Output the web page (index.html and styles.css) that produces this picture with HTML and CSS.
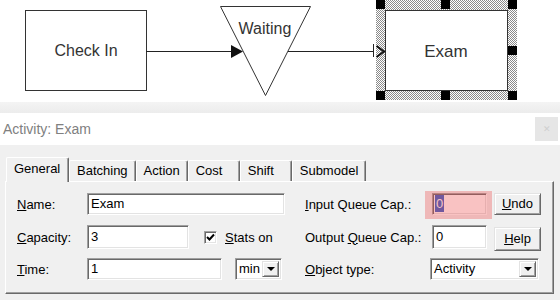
FILE: index.html
```html
<!DOCTYPE html>
<html lang="en">
<head>
  <meta charset="UTF-8" />
  <title>Activity: Exam</title>
  <link rel="stylesheet" href="styles.css">
</head>
<body>
  <div class="canvas">
    <svg width="560" height="102" viewBox="0 0 560 102">
      <defs>
        <pattern id="dots" width="2" height="2" patternUnits="userSpaceOnUse">
          <rect width="2" height="2" fill="#fff"/>
          <rect width="1" height="1" fill="#8a8a8a"/>
          <rect x="1" y="1" width="1" height="1" fill="#8a8a8a"/>
        </pattern>
      </defs>
      <!-- check in -->
      <rect x="25.5" y="10.5" width="121" height="80" fill="#fff" stroke="#333"/>
      <text class="node-label" x="86" y="56">Check In</text>
      <line x1="146" y1="51.5" x2="234" y2="51.5" stroke="#222"/>
      <!-- waiting queue -->
      <polygon points="220.5,6.5 310.5,6.5 265.5,95.5" fill="#fff" stroke="#333"/>
      <polygon points="231,45 243,51.5 231,58" fill="#111"/>
      <text class="node-label" x="265" y="34">Waiting</text>
      <line x1="288" y1="51.5" x2="373" y2="51.5" stroke="#222"/>
      <line x1="373.5" y1="44" x2="373.5" y2="57" stroke="#222"/>
      <!-- exam (selected) -->
      <rect x="376" y="0" width="141" height="100" fill="url(#dots)"/>
      <rect x="385.5" y="10.5" width="122" height="80" fill="#fff" stroke="#333"/>
      <polyline points="376.5,46 384,51.5 376.5,57" fill="none" stroke="#111" stroke-width="2"/>
      <text class="node-label big" x="446" y="57">Exam</text>
      <rect x="376" y="0" width="9" height="9" fill="#000"/>
      <rect x="441" y="0" width="9" height="9" fill="#000"/>
      <rect x="508" y="0" width="9" height="9" fill="#000"/>
      <rect x="508" y="46" width="9" height="9" fill="#000"/>
      <rect x="376" y="91" width="9" height="9" fill="#000"/>
      <rect x="441" y="91" width="9" height="9" fill="#000"/>
      <rect x="508" y="91" width="9" height="9" fill="#000"/>
    </svg>
  </div>
  <div class="gap"></div>

  <div class="dialog">
    <div class="titlebar">
      <span class="title">Activity: Exam</span>
      <span class="close">&#x2715;</span>
    </div>
    <div class="body">
      <div class="tabs">
        <div class="tab active">General</div>
        <div class="tab">Batching</div>
        <div class="tab">Action</div>
        <div class="tab">Cost</div>
        <div class="tab">Shift</div>
        <div class="tab">Submodel</div>
      </div>
      <div class="panel">
        <div class="row r1">
          <div class="cell">
            <span class="lbl"><u>N</u>ame:</span>
            <span class="field w-name">Exam</span>
          </div>
          <div class="cell">
            <span class="lbl rlbl"><u>I</u>nput Queue Cap.:</span>
            <span class="field w-small focus"><span class="sel">0</span></span>
            <span class="btn"><u>U</u>ndo</span>
          </div>
        </div>
        <div class="row r2">
          <div class="cell">
            <span class="lbl"><u>C</u>apacity:</span>
            <span class="field w-cap">3</span>
            <span class="check">
              <svg width="9" height="9" viewBox="0 0 9 9"><polyline points="1,4 3.5,6.5 8,1.5" fill="none" stroke="#000" stroke-width="2"/></svg>
            </span>
            <span class="check-lbl"><u>S</u>tats on</span>
          </div>
          <div class="cell">
            <span class="lbl rlbl">Output <u>Q</u>ueue Cap.:</span>
            <span class="field w-small">0</span>
            <span class="btn tall"><u>H</u>elp</span>
          </div>
        </div>
        <div class="row r3">
          <div class="cell">
            <span class="lbl"><u>T</u>ime:</span>
            <span class="field w-time">1</span>
            <span class="field combo w-min">min<span class="drop"></span></span>
          </div>
          <div class="cell">
            <span class="lbl rlbl2"><u>O</u>bject type:</span>
            <span class="field combo w-type">Activity<span class="drop"></span></span>
          </div>
        </div>
      </div>
    </div>
  </div>
</body>
</html>
```

FILE: styles.css
```css
body {
  margin: 0;
  width: 560px;
  height: 300px;
  overflow: hidden;
  background: #fff;
  font-family: "Liberation Sans", Arial, sans-serif;
  color: #000;
}
.canvas {
  height: 102px;
}
.canvas svg {
  display: block;
}
.node-label {
  font-family: "Liberation Sans", Arial, sans-serif;
  font-size: 16px;
  fill: #333;
  text-anchor: middle;
}
.node-label.big {
  font-size: 17px;
}
.gap {
  height: 11px;
  background: linear-gradient(#f4f4f4, #ececec);
}
.titlebar {
  height: 32px;
  background: #fff;
  display: flex;
  align-items: center;
  justify-content: space-between;
  padding: 0 2px 0 3px;
}
.title {
  font-size: 14px;
  color: #808080;
}
.close {
  width: 23px;
  height: 24px;
  background: #e6e6e6;
  color: #cfcfcf;
  font-size: 9px;
  display: flex;
  align-items: center;
  justify-content: center;
}
.body {
  background: #f0f0f0;
  height: 155px;
  padding: 12px 6px 0 5px;
  font-size: 13px;
}
.tabs {
  display: flex;
  align-items: flex-end;
  height: 24px;
  padding-left: 1px;
  position: relative;
  z-index: 1;
}
.tab {
  box-sizing: border-box;
  height: 21px;
  min-width: 52px;
  padding: 0 7px;
  line-height: 20px;
  background: #f0f0f0;
  border-left: 1px solid #fff;
  border-top: 1px solid #fff;
  border-right: 1px solid #696969;
  box-shadow: inset -1px 0 #a0a0a0;
  border-radius: 2px 2px 0 0;
}
.tab.active {
  height: 25px;
  width: 63px;
  line-height: 21px;
  padding-left: 7px;
  margin-bottom: -1px;
}
.panel {
  box-sizing: border-box;
  height: 113px;
  border: 1px solid;
  border-color: #fff #696969 #696969 #fff;
  box-shadow: inset -1px -1px #a0a0a0;
  padding: 11px 0 0 11px;
}
.row {
  display: grid;
  grid-template-columns: 268px 236px;
  column-gap: 20px;
  align-items: center;
}
.r1 { height: 22px; margin-bottom: 8px; }
.r2 { height: 24px; margin-bottom: 11px; }
.r3 { height: 22px; }
.cell {
  display: flex;
  align-items: center;
  height: 100%;
}
.lbl {
  width: 70px;
  flex: none;
}
.rlbl { width: 127px; }
.rlbl2 { width: 125px; }
.field {
  box-sizing: border-box;
  height: 22px;
  flex: none;
  background: #fff;
  border: 1px solid;
  border-color: #a0a0a0 #fff #fff #a0a0a0;
  box-shadow: inset 1px 1px #696969, inset -1px -1px #e3e3e3;
  padding: 0 3px;
  line-height: 20px;
  white-space: nowrap;
}
.r2 .field { height: 24px; line-height: 22px; }
.w-name { width: 198px; }
.w-cap { width: 102px; }
.w-time { width: 135px; }
.w-small { width: 55px; }
.w-min { width: 47px; margin-left: 13px; }
.w-type { width: 109px; }
.combo {
  position: relative;
}
.drop {
  position: absolute;
  right: 2px;
  top: 2px;
  width: 17px;
  height: 16px;
  box-sizing: border-box;
  background: #f0f0f0;
  border: 1px solid;
  border-color: #e3e3e3 #696969 #696969 #e3e3e3;
  box-shadow: inset 1px 1px #fff, inset -1px -1px #a0a0a0;
}
.drop::after {
  content: "";
  position: absolute;
  left: 4px;
  top: 5px;
  border-left: 4px solid transparent;
  border-right: 4px solid transparent;
  border-top: 4px solid #000;
}
.focus {
  position: relative;
  padding-left: 2px;
}
.focus::after {
  content: "";
  position: absolute;
  left: -8px;
  right: -6px;
  top: -3px;
  bottom: -5px;
  background: rgba(236, 70, 70, 0.33);
  pointer-events: none;
}
.sel {
  background: #3562c9;
  color: #fff;
  padding: 1px 1px;
}
.btn {
  box-sizing: border-box;
  width: 47px;
  height: 22px;
  margin-left: 7px;
  flex: none;
  text-align: center;
  line-height: 20px;
  background: #f0f0f0;
  border: 1px solid;
  border-color: #e3e3e3 #696969 #696969 #e3e3e3;
  box-shadow: inset 1px 1px #fff, inset -1px -1px #a0a0a0;
}
.btn.tall {
  height: 24px;
  line-height: 22px;
  margin-top: 4px;
}
.check {
  box-sizing: border-box;
  width: 13px;
  height: 13px;
  margin-left: 15px;
  background: #fff;
  border: 1px solid;
  border-color: #a0a0a0 #fff #fff #a0a0a0;
  box-shadow: inset 1px 1px #696969, inset -1px -1px #e3e3e3;
  display: flex;
  align-items: center;
  justify-content: center;
}
.check svg {
  display: block;
}
.check-lbl {
  margin-left: 8px;
}
```
